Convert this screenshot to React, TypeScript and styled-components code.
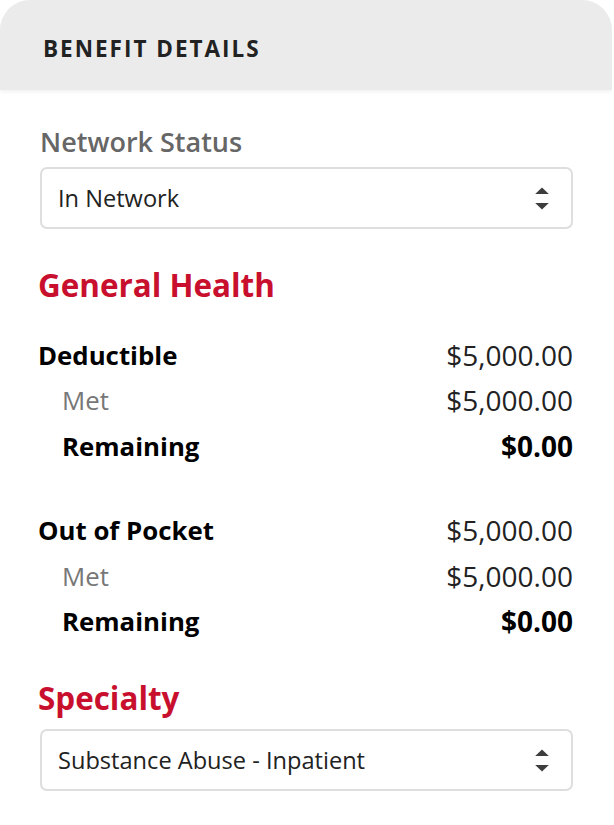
import styled, { createGlobalStyle } from "styled-components";

const GlobalStyle = createGlobalStyle`
  html, body {
    margin: 0;
    padding: 0;
    background: #ffffff;
  }
  body {
    font-family: "Open Sans", "Liberation Sans", sans-serif;
  }
  * {
    box-sizing: border-box;
  }
`;

type Line = {
  label: string;
  value: string;
  kind: "head" | "met" | "remaining";
};

const groups: Line[][] = [
  [
    { label: "Deductible", value: "$5,000.00", kind: "head" },
    { label: "Met", value: "$5,000.00", kind: "met" },
    { label: "Remaining", value: "$0.00", kind: "remaining" },
  ],
  [
    { label: "Out of Pocket", value: "$5,000.00", kind: "head" },
    { label: "Met", value: "$5,000.00", kind: "met" },
    { label: "Remaining", value: "$0.00", kind: "remaining" },
  ],
];

const SortArrows = () => (
  <svg width="14" height="23" viewBox="0 0 14 23">
    <path d="M7 0.5 L13.8 7 L0.2 7 Z" fill="#3d3d3d" />
    <path d="M0.2 16 L13.8 16 L7 22.5 Z" fill="#3d3d3d" />
  </svg>
);

const App = () => {
  return (
    <>
      <GlobalStyle />
      <Card>
        <Header>
          <HeaderTitle>Benefit Details</HeaderTitle>
        </Header>
        <Body>
          <FieldLabel>Network Status</FieldLabel>
          <SelectBox>
            <SelectText>In Network</SelectText>
            <SortArrows />
          </SelectBox>

          <SectionTitle gap={27}>General Health</SectionTitle>

          {groups.map((group, gi) => (
            <Group key={gi}>
              {group.map((line, li) => (
                <Row key={li} kind={line.kind}>
                  <RowLabel kind={line.kind}>{line.label}</RowLabel>
                  <RowValue kind={line.kind}>{line.value}</RowValue>
                </Row>
              ))}
            </Group>
          ))}

          <SectionTitle gap={11}>Specialty</SectionTitle>
          <SelectBox>
            <SelectText>Substance Abuse - Inpatient</SelectText>
            <SortArrows />
          </SelectBox>
        </Body>
      </Card>
    </>
  );
};

export default App;

const Card = styled.div`
  width: 612px;
  background: #ffffff;
  border-radius: 30px 30px 0 0;
  overflow: hidden;
`;

const Header = styled.div`
  height: 90px;
  background: #ebebeb;
  display: flex;
  align-items: center;
  padding: 6px 42px 0 43px;
  box-shadow: 0 2px 4px rgba(0, 0, 0, 0.06);
`;

const HeaderTitle = styled.h2`
  margin: 0;
  font-size: 22.5px;
  font-weight: 700;
  letter-spacing: 2px;
  text-transform: uppercase;
  color: #222;
`;

const Body = styled.div`
  padding: 34px 39px 30px 40px;
  display: flex;
  flex-direction: column;
`;

const FieldLabel = styled.div`
  font-size: 27px;
  font-weight: 600;
  color: #666;
  line-height: 36px;
  margin-bottom: 7px;
`;

const SelectBox = styled.div`
  height: 62px;
  border: 2px solid #dedede;
  border-radius: 7px;
  display: flex;
  align-items: center;
  justify-content: space-between;
  padding: 0 22px 0 16px;
`;

const SelectText = styled.span`
  font-size: 23.6px;
  color: #222;
`;

const SectionTitle: any = styled.h3`
  margin: 36px 0 ${(props: any) => props.gap}px -2px;
  font-size: 31.4px;
  font-weight: 700;
  color: #c8102e;
  line-height: 40px;
`;

const Group = styled.div`
  display: flex;
  flex-direction: column;
  margin-left: -2px;
  & + & {
    margin-top: 39px;
  }
  & + ${SectionTitle} {
    margin-top: 34px;
  }
`;

const Row: any = styled.div`
  display: flex;
  justify-content: space-between;
  align-items: center;
  height: 45.5px;
  padding-left: ${(props: any) => (props.kind === "head" ? "0" : "24px")};
`;

const RowLabel: any = styled.span`
  font-size: 25.8px;
  font-weight: ${(props: any) => (props.kind === "met" ? 400 : 700)};
  color: ${(props: any) => (props.kind === "met" ? "#777" : "#000")};
`;

const RowValue: any = styled.span`
  font-size: 28px;
  font-weight: ${(props: any) => (props.kind === "remaining" ? 700 : 400)};
  color: ${(props: any) => (props.kind === "remaining" ? "#000" : "#222")};
`;
